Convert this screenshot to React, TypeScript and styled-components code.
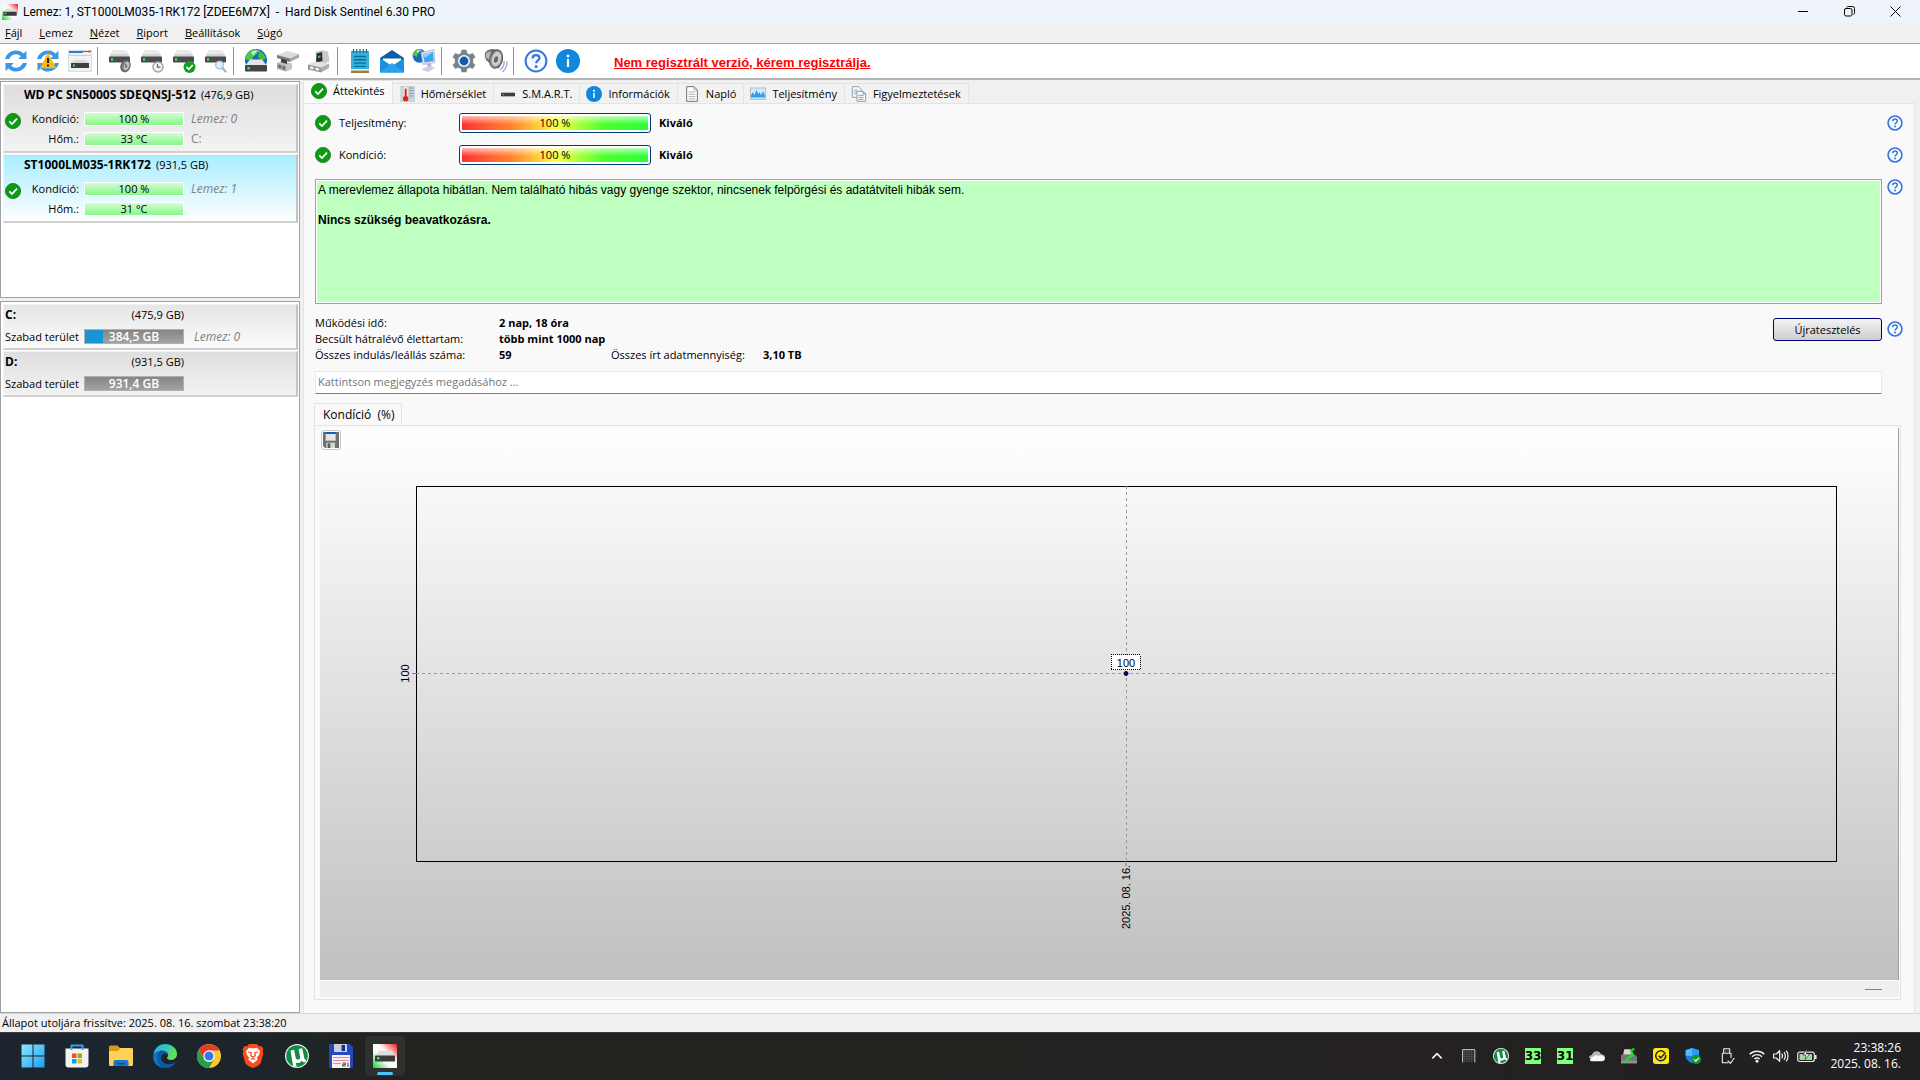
import React from "react";
import styled, { createGlobalStyle, css } from "styled-components";

const UI = `"Open Sans", "Noto Sans", sans-serif`;
const ARIAL = `"Liberation Sans", Arial, sans-serif`;

const Global = createGlobalStyle`
  *, *::before, *::after { box-sizing: border-box; }
  html, body, #root { height: 100%; margin: 0; }
  body { font: 11px/16px ${UI}; color: #000; background: #f0f0f0; overflow: hidden; }
  button, input { font: inherit; color: inherit; margin: 0; }
  button { padding: 0; border: 0; background: none; cursor: default; }
  p, h1, dl, dd, dt, ul { margin: 0; padding: 0; font-size: inherit; font-weight: inherit; }
  ul { list-style: none; }
  svg { display: block; flex: none; }
`;

/* ---------- window frame ---------- */

const Desktop = styled.div`
  display: flex;
  flex-direction: column;
  height: 100vh;
`;

const TitleBar = styled.header`
  display: flex;
  align-items: center;
  height: 23px;
  padding: 0 2px;
  background: #eff4fa;
`;

const Title = styled.h1`
  flex: 1;
  padding-left: 5px;
  font: 12px/16px Roboto, ${UI};
  white-space: pre;
`;

const CaptionButton = styled.button`
  display: grid;
  place-items: center;
  width: 46px;
  height: 23px;
`;

const MenuBar = styled.nav`
  display: flex;
  align-items: center;
  height: 20px;
  gap: 17px;
  padding-left: 5px;
  background: #f0f0f0;
`;

const ToolBar = styled.div`
  display: flex;
  align-items: center;
  height: 37px;
  padding-left: 4px;
  border-top: 1px solid #a0a0a0;
  border-bottom: 2px solid #b4b4b4;
  background: #fff;
`;

const ToolGroup = styled.div<{ $last?: boolean }>`
  display: flex;
  align-items: center;
  gap: 8px;
  height: 28px;
  padding-right: 5px;
  margin-right: 10px;
  border-right: ${(p) => (p.$last ? "0" : "1px solid #909090")};
`;

const ToolButton = styled.button`
  width: 24px;
  height: 24px;
`;

const RegisterLink = styled.a`
  margin: 4px 0 0 19px;
  font: bold 13px/16px ${ARIAL};
  color: #f00;
  text-decoration: underline;
`;

const Body = styled.div`
  flex: 1;
  display: flex;
  min-height: 0;
`;

/* ---------- left column ---------- */

const Sidebar = styled.aside`
  display: flex;
  flex-direction: column;
  gap: 3px;
  width: 300px;
  flex: none;
  padding-top: 1px;
`;

const ListBox = styled.ul<{ $grow?: boolean }>`
  border: 1px solid #a0a0a5;
  background: #fff;
  padding: 2px 1px 2px 2px;
  display: flex;
  flex-direction: column;
  gap: 1px;
  ${(p) => (p.$grow ? "flex: 1;" : "height: 217px;")}
`;

const tone = {
  plain: "linear-gradient(#dedede, #f3f3f3)",
  light: "linear-gradient(#e6e6e6, #fbfbfb)",
  selected: "linear-gradient(#a8edff, #ffffff)",
};

const Item = styled.li<{ $tone: keyof typeof tone }>`
  display: grid;
  align-items: center;
  border-style: solid;
  border-width: 1px 2px 2px 1px;
  border-color: #f2f2f2 #c4c4c4 #cfcfcf #f2f2f2;
  background: ${(p) => tone[p.$tone]};
  white-space: nowrap;
`;

const DiskItem = styled(Item)`
  grid-template-columns: 19px 50px 100px 1fr;
  grid-template-rows: 24px 20px 20px;
  column-gap: 5px;
  padding: 0 0 2px 1px;
`;

const DiskName = styled.p`
  grid-column: 1 / -1;
  align-self: start;
  display: flex;
  gap: 5px;
  padding-left: 19px;
  line-height: 20px;
  b { font-size: 12px; }
`;

const StateCell = styled.span`
  grid-row: 2 / 4;
  align-self: start;
  margin-top: 4px;
`;

const RowLabel = styled.span`
  text-align: right;
`;

const GreenBar = styled.div`
  height: 14px;
  border: 1px solid #fff;
  background: linear-gradient(#d4fcd4, #86f886);
  line-height: 12px;
  text-align: center;
`;

const Side = styled.span<{ $plain?: boolean; $indent?: boolean }>`
  padding-left: ${(p) => (p.$indent ? "8px" : "2px")};
  color: #808080;
  font-size: 12px;
  font-style: ${(p) => (p.$plain ? "normal" : "italic")};
`;

const DriveItem = styled(Item)`
  grid-template-columns: 77px 100px 1fr;
  grid-template-rows: 20px 23px;
  column-gap: 2px;
  padding: 0 0 0 1px;
`;

const DriveName = styled.b`
  font-size: 12px;
`;

const Capacity = styled.span`
  text-align: right;
`;

const SpaceBar = styled.div<{ $used: number }>`
  height: 15px;
  border: 1px solid #b0b0b0;
  background: linear-gradient(90deg, #1a94d2 ${(p) => p.$used}%, transparent 0),
    linear-gradient(#858585, #a2a2a2);
  color: #fff;
  font-size: 12px;
  font-weight: 600;
  line-height: 13px;
  text-align: center;
`;

/* ---------- right column ---------- */

const Main = styled.main`
  flex: 1;
  min-width: 0;
  display: flex;
  flex-direction: column;
  margin: 0 5px 0 3px;
`;

const Tabs = styled.div`
  display: flex;
  align-items: flex-end;
  height: 23px;
`;

const Tab = styled.button<{ $active?: boolean }>`
  display: flex;
  align-items: center;
  gap: 6px;
  padding: 0 7px 0 6px;
  height: 20px;
  border: 1px solid #e4e4e4;
  border-left-width: 0;
  border-bottom: 0;
  background: #f2f2f2;
  white-space: nowrap;
  ${(p) =>
    p.$active &&
    css`
      height: 23px;
      padding: 0 7px 2px;
      border-left-width: 1px;
      background: #f9f9f9;
    `}
`;

const TabIcon = styled.span`
  display: grid;
  place-items: center;
  width: 16px;
`;

const Page = styled.section`
  flex: 1;
  min-height: 0;
  display: flex;
  flex-direction: column;
  padding: 3px 11px 13px 11px;
  border: 1px solid #e4e4e4;
  border-bottom: 0;
  background: #f9f9f9;
`;

const Line = styled.div`
  display: flex;
  align-items: center;
  height: 32px;
  flex: none;
`;

const RatingLabel = styled.span`
  flex: none;
  width: 128px;
  padding-left: 8px;
`;

const Meter = styled.div`
  width: 192px;
  height: 20px;
  padding: 2px;
  border: 1px solid #003c7c;
  border-radius: 3px;
  background: #fff;
`;

const MeterFill = styled.div`
  height: 14px;
  background: linear-gradient(rgba(255, 255, 255, 0.65), rgba(255, 255, 255, 0.15) 45%, transparent 60%),
    linear-gradient(90deg, #ff3030, #ff8a30 28%, #ffff40 50%, #50ff30 76%, #28ff38);
  line-height: 14px;
  text-align: center;
`;

const Verdict = styled.strong`
  flex: 1;
  padding-left: 8px;
  font-weight: 700;
`;

const StatusRow = styled.div`
  display: flex;
  flex: none;
  gap: 5px;
  margin-top: 8px;
`;

const StatusBox = styled.div`
  flex: 1;
  height: 125px;
  padding: 3px 2px;
  border: 1px solid #a0a0a5;
  box-shadow: inset 0 0 0 1px #fff;
  background: #bfffbf;
  font: 12px/15px ${ARIAL};
`;

const StatusStrong = styled.p`
  margin-top: 15px;
  font-weight: bold;
`;

const FactsRow = styled.div`
  display: flex;
  flex: none;
  align-items: flex-start;
  gap: 5px;
  margin-top: 11px;
`;

const Facts = styled.dl`
  flex: 1;
  display: grid;
  grid-template-columns: 184px 112px 152px 1fr;
  line-height: 16px;
  white-space: nowrap;
`;

const Fact = styled.dd<{ $wide?: boolean }>`
  font-weight: 700;
  ${(p) => p.$wide && "grid-column: 2 / -1;"}
`;

const RetestButton = styled.button`
  width: 109px;
  height: 23px;
  margin-top: 3px;
  border: 1px solid #00007c;
  border-radius: 3px;
  background: linear-gradient(#f4f4f4, #cdcdcd);
`;

const HelpButton = styled.button<{ $low?: boolean }>`
  width: 16px;
  height: 16px;
  margin-top: ${(p) => (p.$low ? "6px" : "0")};
`;

const Comment = styled.input`
  flex: none;
  height: 23px;
  margin: 8px 21px 0 0;
  padding: 0 2px 2px;
  border: 1px solid #e8e8e8;
  border-bottom-color: #808080;
  background: #fff;
  outline: 0;
  &::placeholder { color: #757575; opacity: 1; }
`;

const ChartTab = styled.button`
  align-self: flex-start;
  flex: none;
  height: 23px;
  margin: 9px 0 -1px -1px;
  padding: 0 6px 0 8px;
  border: 1px solid #e4e4e4;
  border-bottom: 0;
  background: #f9f9f9;
  font-size: 12px;
  white-space: pre;
`;

const ChartPane = styled.div`
  flex: 1;
  min-height: 0;
  display: flex;
  flex-direction: column;
  margin: 0 2px 0 -1px;
  padding: 2px 1px 2px 5px;
  border: 1px solid #e4e4e4;
`;

const ChartArea = styled.figure`
  position: relative;
  flex: 1;
  min-height: 0;
  display: flex;
  margin: 0;
  padding: 58px 62px 119px 96px;
  border-right: 1px solid #a0a0a0;
  background: linear-gradient(#fff, #c0c0c0);
`;

const SaveButton = styled.button`
  position: absolute;
  left: 1px;
  top: 2px;
  display: grid;
  place-items: center;
  width: 20px;
  height: 20px;
  border: 1px solid #c8c8c8;
  border-radius: 3px;
  background: #fdfdfd;
`;

const Plot = styled.svg`
  flex: 1;
  overflow: visible;
  text { font: 11px ${ARIAL}; text-anchor: middle; }
`;

const ChartFooter = styled.div`
  display: flex;
  align-items: center;
  justify-content: flex-end;
  height: 16px;
  margin-top: 1px;
  padding-right: 17px;
  background: #efefef;
`;

const Dash = styled.span`
  width: 17px;
  border-top: 1px solid #808080;
`;

const StatusBar = styled.footer`
  height: 19px;
  padding-left: 2px;
  border-top: 1px solid #d8d8d8;
  background: #f0f0f0;
  line-height: 18px;
`;

/* ---------- taskbar ---------- */

const TaskBar = styled.div`
  display: flex;
  align-items: center;
  flex: none;
  height: 48px;
  padding: 0 19px 1px 13px;
  border-top: 1px solid #38393b;
  background: linear-gradient(90deg, #1c2431, #1d2529 14%, #22231f 20%, #242120 75%, #202023);
  color: #fff;
`;

const Pinned = styled.div`
  display: flex;
  flex: 1;
  gap: 4px;
`;

const AppButton = styled.button<{ $active?: boolean }>`
  position: relative;
  display: grid;
  place-items: center;
  width: 40px;
  height: 40px;
  border-radius: 4px;
  ${(p) =>
    p.$active &&
    css`
      background: #2e2f2f;
      &::after {
        content: "";
        position: absolute;
        left: 12px;
        bottom: 1px;
        width: 16px;
        height: 3px;
        border-radius: 2px;
        background: #4cc2ff;
      }
    `}
`;

const Tray = styled.div`
  display: flex;
  align-items: center;
`;

const TrayButton = styled.button<{ $w?: number }>`
  display: grid;
  place-items: center;
  width: ${(p) => p.$w ?? 32}px;
  height: 40px;
`;

const TempBadge = styled.span`
  width: 16px;
  height: 16px;
  background: #80ff80;
  color: #000;
  font: bold 13px/16px "DejaVu Sans Condensed", "DejaVu Sans", sans-serif;
  text-align: center;
  overflow: hidden;
`;

const Clock = styled.time`
  width: 80px;
  text-align: right;
  font-size: 12px;
  line-height: 16px;
`;

/* ---------- icons ---------- */

const Svg = ({ s = 24, children }: { s?: number; children: React.ReactNode }) => (
  <svg width={s} height={s} viewBox="0 0 24 24" fill="none" aria-hidden="true">
    {children}
  </svg>
);

const DriveShape = ({ t = "" }: { t?: string }) => (
  <g transform={t}>
    <path d="M5 0h13l4 7.500H1z" fill="#d4d4d6" />
    <path d="M5 0h13l2 4H3z" fill="#e9e9ea" />
    <rect x="1" y="6.500" width="21" height="6" rx="0.800" fill="#4b4b4d" />
    <rect x="3" y="8.300" width="2.200" height="2.200" fill="#30f050" />
  </g>
);

const CheckIcon = () => (
  <Svg s={16}>
    <circle cx="12" cy="12" r="11.400" fill="#0f9a16" stroke="#0b7a10" strokeWidth="1.200" />
    <path d="M6.500 12.500l4 4 7.500-8" stroke="#fff" strokeWidth="2.600" />
  </Svg>
);

const HelpIcon = ({ s = 16 }: { s?: number }) => (
  <Svg s={s}>
    <circle cx="12" cy="12" r="10.400" fill="#f6faff" stroke="#3575d6" strokeWidth={s > 16 ? 2 : 2.4} />
    <path d="M8.600 9.400c0-2.200 1.500-3.300 3.400-3.300s3.400 1.100 3.400 3c0 2.600-3.300 2.600-3.300 5.200" stroke="#3575d6" strokeWidth="2.200" />
    <circle cx="12.100" cy="17.400" r="1.500" fill="#3575d6" />
  </Svg>
);

const InfoIcon = ({ s = 24 }: { s?: number }) => (
  <Svg s={s}>
    <circle cx="12" cy="12" r="12" fill="#0f88dc" />
    <circle cx="12" cy="7" r="1.500" fill="#fff" />
    <path d="M12 10v8" stroke="#fff" strokeWidth="2.200" />
  </Svg>
);

const RefreshShape = () => (
  <g fill="#3a97e6">
    <path d="M1 10C2.500 4.500 7 1.500 12 1.500c3.200 0 5.600 1.200 7.400 3.100L22.500 2v8h-8.300l2.700-2.800C15.600 5.900 14 5.200 12 5.200c-3 0-5.600 1.800-6.800 4.800z" />
    <path d="M23 14c-1.500 5.500-6 8.500-11 8.500-3.200 0-5.600-1.200-7.400-3.100L1.500 22v-8h8.300l-2.700 2.800c1.300 1.300 2.900 2 4.900 2 3 0 5.600-1.800 6.800-4.800z" />
  </g>
);

const RefreshIcon = () => <Svg><RefreshShape /></Svg>;

const RefreshWarnIcon = () => (
  <Svg>
    <RefreshShape />
    <path d="M12 5l7 13.500H5z" fill="#fdb714" stroke="#fdb714" strokeWidth="1.500" strokeLinejoin="round" />
    <path d="M12 9v5M12 15.500v2" stroke="#222" strokeWidth="2" />
  </Svg>
);

const WindowDriveIcon = () => (
  <Svg>
    <rect x="0.500" y="1.500" width="23" height="21" fill="#f1f1f2" stroke="#dcdcde" />
    <path d="M1 3h14" stroke="#2b7fd4" strokeWidth="2" />
    <path d="M15 2.500h5" stroke="#6b6b6b" />
    <path d="M20 2.500h3" stroke="#e23a2e" strokeWidth="1.500" />
    <path d="M1 6.500h22" stroke="#cfcfd2" />
    <path d="M6 11h12l3 4H3z" fill="#dadada" />
    <rect x="3" y="14" width="18" height="5" fill="#3f3f41" />
    <rect x="5" y="15.500" width="2" height="2" fill="#30f050" />
  </Svg>
);

const DriveSpeakerIcon = () => (
  <Svg>
    <DriveShape t="translate(0 1)" />
    <ellipse cx="17.500" cy="17" rx="4.500" ry="6" transform="rotate(20 17.500 17)" fill="#77777a" stroke="#5f5f61" />
    <ellipse cx="18.500" cy="17" rx="2.600" ry="4.300" transform="rotate(20 18.500 17)" fill="#c4c4c8" />
    <ellipse cx="18" cy="17" rx="1.200" ry="2" fill="#77777a" />
  </Svg>
);

const DriveClockIcon = () => (
  <Svg>
    <DriveShape t="translate(0 1)" />
    <circle cx="18" cy="18" r="5" fill="#f4f4f4" stroke="#a4a4a8" strokeWidth="1.500" />
    <path d="M17.500 15v3.200h3" stroke="#666" strokeWidth="1.200" />
  </Svg>
);

const DriveCheckIcon = () => (
  <Svg>
    <DriveShape t="translate(0 1)" />
    <circle cx="17.500" cy="18" r="6" fill="#0fa01c" />
    <path d="M14.500 18l2.300 2.300 4-4.300" stroke="#fff" strokeWidth="1.800" />
  </Svg>
);

const DriveSearchIcon = () => (
  <Svg>
    <DriveShape t="translate(0 1)" />
    <circle cx="15.500" cy="16" r="3.800" fill="#dff0ff" stroke="#a9bccd" strokeWidth="1.300" />
    <path d="M18.300 19l4 4.300" stroke="#b9a9a0" strokeWidth="2" />
  </Svg>
);

const GlobeShape = ({ t = "" }: { t?: string }) => (
  <g transform={t}>
    <circle cx="12" cy="11" r="11" fill="#1767c8" />
    <path d="M3 5q4-5 9-5l1 5-4 3-1 5-4-2-3-1Q1 7 3 5z" fill="#4dc840" />
    <path d="M15 2q5 2 7 7l-4 3-4-4z" fill="#48bd3c" />
    <path d="M7 3q5-3 9-1-5 1-7 5z" fill="#d8f4ff" opacity="0.750" />
  </g>
);

const GlobeDriveIcon = () => (
  <Svg>
    <GlobeShape />
    <path d="M6 10.500h12l5 6.500H1z" fill="#e4e4e4" />
    <rect x="1" y="16" width="22" height="6.500" rx="0.800" fill="#454547" />
    <rect x="3.500" y="18" width="2.400" height="2.400" fill="#30f050" />
  </Svg>
);

const PrinterDriveIcon = () => (
  <Svg>
    <path d="M1 6L11 2l12 3-9 4.500z" fill="#dadada" />
    <path d="M14 9.500L23 5v3.500L14 13z" fill="#a6a6a6" />
    <path d="M1 6l13 3.500V13L1 9z" fill="#78787a" />
    <path d="M1 14l6-2 9 2.500v5.500L10 22.500 1 19.500z" fill="#c4c4c6" />
    <path d="M1 14l9 3v5.500L1 19.500z" fill="#a2a2a4" />
    <path d="M2.500 16l2.500.800V19l-2.500-.800zM6.500 17.300l2.500.800v2.300l-2.500-.800z" fill="#5c5c5e" />
    <path d="M5 9.500l6 1.800V15l-6-1.800z" fill="#3f3f41" />
  </Svg>
);

const ServerIcon = () => (
  <Svg>
    <path d="M7 3l7-2 6 1.500 1.500 10-10 3.500z" fill="#c9c9cb" />
    <path d="M8.500 4.500l5.500-1.500.500 9-6.500 1.500z" fill="#2c2c2f" />
    <path d="M10 7l2.500-.500v2L10 9z" fill="#2ed04a" />
    <path d="M0 15.500l7-3 14 2-8 4z" fill="#e2e2e4" />
    <path d="M0 15.500l13 3v5L0 20.500z" fill="#939397" />
    <path d="M13 18.500l8-4v4.500l-8 4.500z" fill="#adadaf" />
    <path d="M2 17.200l3.500.800v2.500L2 19.700zM7.500 18.500l3.500.800v2.500l-3.500-.800z" fill="#f0f0f0" />
  </Svg>
);

const NotepadIcon = () => (
  <Svg>
    <rect x="3" y="2" width="18" height="20" fill="#35b0d8" />
    <path d="M3 21.500h18V24H3z" fill="#b4762a" />
    <path d="M3 20h18v1.500H3z" fill="#f2f2f2" />
    <path d="M5.500 0v4M8.700 0v4M12 0v4M15.300 0v4M18.500 0v4" stroke="#176f96" strokeWidth="1.300" />
    <path d="M6 7.500h12M6 10.800h12M6 14.100h12M6 17.400h12" stroke="#0f6f9c" strokeWidth="1.400" />
  </Svg>
);

const MailIcon = () => (
  <Svg>
    <path d="M0 9L12 1l12 8v4H0z" fill="#0b5fa8" />
    <path d="M3 9.500h18V16H3z" fill="#fff" />
    <path d="M0 9l12 8 12-8v14.500H0z" fill="#1a8fe0" />
    <path d="M0 23.500L12 14l12 9.500z" fill="#2aa0ee" />
  </Svg>
);

const GlobeMonitorIcon = () => (
  <Svg>
    <GlobeShape t="scale(0.620)" />
    <path d="M9 3.500l13-3 1 13-12 2z" fill="#e2e2ee" stroke="#a9a9bb" strokeWidth="0.700" />
    <path d="M11 5l10-2.300.700 9.300-9.200 1.500z" fill="#3aa6f0" />
    <path d="M11 5l10-2.300L13 9z" fill="#8fd4ff" />
    <path d="M15 15l4-.500.500 4h-4z" fill="#b6b4cc" />
    <path d="M9 20l8-3 6 2-7 4z" fill="#cfcde0" />
  </Svg>
);

const GearIcon = () => (
  <Svg>
    <path
      d="M9.500 0.800h5l.600 3.300 2.500 1.300 3-1.300 2.800 4-2.300 2.200v3.400l2.300 2.200-2.800 4-3-1.300-2.500 1.300-.600 3.300h-5l-.600-3.300-2.500-1.300-3 1.300-2.800-4 2.300-2.200v-3.400L.600 8.100l2.800-4 3 1.300 2.500-1.300z"
      fill="#7a838c"
    />
    <circle cx="12" cy="12" r="6" fill="#f4f8fc" />
    <circle cx="12" cy="12" r="4.400" fill="#0c5cb0" />
  </Svg>
);

const SpeakerIcon = () => (
  <Svg>
    <path d="M1 4Q3 .500 8 0l7 1q4 5 3.500 12L15 19q-4 1-7-3L2 11Q0 7 1 4z" fill="#6b6b6d" />
    <path d="M2 4.500Q4 2 7 2.500L6 12 2.500 9Q1 7 2 4.500z" fill="#b4b4b6" />
    <ellipse cx="12" cy="10" rx="6.300" ry="9.300" transform="rotate(14 12 10)" fill="#8f8f91" stroke="#58585a" />
    <ellipse cx="12.500" cy="10" rx="4.500" ry="7.300" transform="rotate(14 12.500 10)" fill="#cfcfd1" />
    <ellipse cx="12" cy="10.500" rx="2" ry="3.300" transform="rotate(14 12 10.500)" fill="#66666a" />
    <path d="M20 12q1 5-4 9M23 12.500q.500 6-4.500 10.500" stroke="#a6a6cc" strokeWidth="1.300" />
  </Svg>
);

const ThermoIcon = () => (
  <Svg s={16}>
    <rect x="2" y="0" width="22" height="24" fill="#c9d2da" />
    <path d="M15 3h7M15 7h7M15 11h7M15 15h7" stroke="#8f9aa4" strokeWidth="1.500" />
    <rect x="7" y="1" width="6" height="18" rx="3" fill="#f2f2f2" />
    <path d="M10 4v14" stroke="#d82418" strokeWidth="3" />
    <circle cx="10" cy="19" r="4" fill="#d82418" />
  </Svg>
);

const SmartIcon = () => (
  <Svg s={14}>
    <path d="M2 9h20l2 2H0z" fill="#c8c8c8" />
    <rect x="0" y="10" width="24" height="6" fill="#3d3d3f" />
    <rect x="3" y="12" width="2.500" height="2" fill="#30e050" />
  </Svg>
);

const PageIcon = () => (
  <Svg s={16}>
    <path d="M4 1h11l5 5v17H4z" fill="#fff" stroke="#6f6f6f" strokeWidth="1.500" />
    <path d="M15 1v5h5M7 9h10M7 12.500h10M7 16h10M7 19.500h10" stroke="#9a9a9a" strokeWidth="1.200" />
  </Svg>
);

const WaveIcon = () => (
  <Svg s={16}>
    <rect x="0.700" y="3" width="22.600" height="17" fill="#d4ecff" stroke="#a8bccc" strokeWidth="1.400" />
    <path d="M1.500 14l3-5 2 5 3-8 3 6 2-3 2 5 3-6 2 4 1 3v4h-21z" fill="#3a9ae8" />
    <path d="M1.500 17h21v2.500h-21z" fill="#bfe2fb" />
  </Svg>
);

const PagesIcon = () => (
  <Svg s={16}>
    <path d="M2 1h9l4 4v12H2z" fill="#fff" stroke="#8c949c" strokeWidth="1.400" />
    <path d="M4 6h6M4 9h5M4 12h5" stroke="#5b9bd5" strokeWidth="1.200" />
    <path d="M9 8h9l4 4v11H9z" fill="#fff" stroke="#8c949c" strokeWidth="1.400" />
    <path d="M18 8v4h4M11 14h8M11 17h8M11 20h8" stroke="#4a8cd0" strokeWidth="1.200" />
  </Svg>
);

const SaveIcon = () => (
  <Svg s={16}>
    <path d="M0 0h24v24H3l-3-3z" fill="#707072" />
    <rect x="4" y="0" width="15" height="3" fill="#0a62b8" />
    <rect x="4" y="3" width="15" height="10" fill="#e6e6e6" />
    <rect x="5" y="16" width="13" height="8" fill="#d4d4d4" />
    <rect x="7" y="17" width="4" height="7" fill="#5a5a5c" />
  </Svg>
);

const AppIcon = ({ s }: { s: number }) => (
  <Svg s={s}>
    <defs>
      <linearGradient id="hds" x1="0" y1="1" x2="1" y2="0">
        <stop offset="0" stopColor="#10d030" />
        <stop offset="0.380" stopColor="#f4fff4" />
        <stop offset="0.620" stopColor="#fff4f4" />
        <stop offset="1" stopColor="#f01818" />
      </linearGradient>
    </defs>
    <rect width="24" height="24" fill="url(#hds)" />
    <path d="M6 7h13l3 5H2z" fill="#dcdcdc" />
    <rect x="2" y="11.500" width="20" height="6" rx="0.800" fill="#3a3a3c" />
    <rect x="4" y="13" width="2.400" height="2.400" fill="#30f050" />
  </Svg>
);

const WindowsIcon = () => (
  <Svg>
    <defs>
      <linearGradient id="win" x1="0" y1="0" x2="1" y2="1">
        <stop offset="0" stopColor="#8ce8ff" />
        <stop offset="1" stopColor="#1f9ff0" />
      </linearGradient>
    </defs>
    <path d="M.500.500h11v11H.500zM12.500.500h11v11h-11zM.500 12.500h11v11H.500zM12.500 12.500h11v11h-11z" fill="url(#win)" />
  </Svg>
);

const StoreIcon = () => (
  <Svg>
    <path d="M6.500 6V1.500h11V6" stroke="#2aa4ea" strokeWidth="2" />
    <path d="M.500 4.500h23v16a3 3 0 0 1-3 3h-17a3 3 0 0 1-3-3z" fill="#f2f2f2" />
    <path d="M6.500 6V4.500M17.500 6V4.500" stroke="#2aa4ea" strokeWidth="2" />
    <path d="M7 9.500h4.500V14H7z" fill="#f25022" />
    <path d="M12.500 9.500H17V14h-4.500z" fill="#7fba00" />
    <path d="M7 15h4.500v4.500H7z" fill="#00a4ef" />
    <path d="M12.500 15H17v4.500h-4.500z" fill="#ffb900" />
  </Svg>
);

const FolderIcon = () => (
  <Svg>
    <path d="M0 3a1.500 1.500 0 0 1 1.500-1.500h7L11 4h11.500A1.500 1.500 0 0 1 24 5.500V8H0z" fill="#d89a14" />
    <path d="M0 7h9l2-3h11.500A1.500 1.500 0 0 1 24 5.500v15a1.500 1.500 0 0 1-1.500 1.500h-21A1.500 1.500 0 0 1 0 20.500z" fill="#fdd15a" />
    <path d="M4.500 22v-4a2 2 0 0 1 2-2h11a2 2 0 0 1 2 2v4z" fill="#1a78c8" />
    <path d="M8 19h8v1.500H8z" fill="#0d4f94" />
  </Svg>
);

const EdgeIcon = () => (
  <Svg>
    <defs>
      <linearGradient id="edgeTop" x1="0" y1="0" x2="1" y2="0.300">
        <stop offset="0" stopColor="#2aa8e8" />
        <stop offset="0.600" stopColor="#34c8b8" />
        <stop offset="1" stopColor="#6ae04e" />
      </linearGradient>
    </defs>
    <path d="M.300 11C1 4.500 6 0 12.200 0 19 0 24 4.500 24 10c0 3.500-2.700 6-6 6-2.600 0-4-1-4-1.900 0-.800 1-1 1-3C15 8.600 12.500 6.800 9.500 6.800 5 6.800 1 9.500.300 11z" fill="url(#edgeTop)" />
    <path d="M.100 12.500C.500 8.500 5 6.800 9.200 6.800c-3 1-4.600 4-4.600 7.200 0 4.500 3.600 8.500 8 9.900C5.500 24.300 0 19 .100 12.500z" fill="#1273c8" />
    <path d="M9.600 10.500c-1 1-1.400 2.300-1.400 3.500 0 3.500 3.400 6.200 7.600 6.200 2.400 0 4.700-.700 5.900-1.600.500-.300 1 .100.700.600C20.500 22 17 24 13.500 24 8 24 4.300 19.500 4.300 15c0-4.500 2.500-6.500 5.200-8 2.500 0 5.500 1.200 5.500 4.200-1-1.900-4-2.200-5.400-.700z" fill="#0c59a4" />
  </Svg>
);

const ChromeIcon = () => (
  <Svg>
    <circle cx="12" cy="12" r="12" fill="#fcc934" />
    <path d="M1.600 6A12 12 0 0 1 22.400 6.400H12L6.800 15z" fill="#e33b2e" />
    <path d="M1.600 6l5.200 9A6 6 0 0 0 17.200 15L12 24A12 12 0 0 1 1.600 6z" fill="#22a04a" />
    <circle cx="12" cy="12" r="5.700" fill="#fff" />
    <circle cx="12" cy="12" r="4.500" fill="#3478e8" />
  </Svg>
);

const BraveIcon = () => (
  <Svg>
    <path d="M8 0h8l2 2.300 2.500-.300 1.800 3-.600 2 .600 2.500-2.600 9.500c-.400 1.300-4.500 4.200-7.700 5-3.200-.800-7.300-3.700-7.700-5L1.700 9.500 2.300 7l-.600-2 1.800-3 2.500.300z" fill="#fb4a1c" />
    <path
      d="M12 4.500l4-.700 3 3.400-1 3.800-2.200 2.400.900 2.200-2 1.600L12 19.500l-2.700-2.300-2-1.600.900-2.200L6 11 5 7.200l3-3.400z"
      fill="#fff"
    />
    <path d="M7 8l3.300 1-.500 2.700L12 13l2.200-1.300-.500-2.700L17 8M10 15.500l2-1.200 2 1.200" stroke="#fb4a1c" strokeWidth="1.300" />
  </Svg>
);

const TorrentIcon = ({ s }: { s: number }) => (
  <Svg s={s}>
    <circle cx="12" cy="12" r="12" fill="#e8f4ec" />
    <circle cx="12" cy="12" r="10.800" fill="#148a48" />
    <path d="M5.500 6.500l3.600-.700 1.500 7.500c.400 1.900 1.500 2.600 2.800 2.300 1.400-.300 2-1.400 1.600-3.200L13.600 5l3.600-.700 2.200 10.200c.200.900.700 1.100 1.500.900l.400 2.400c-2.300.800-3.900.200-4.600-1.400-.700 1.400-1.700 2.200-3.200 2.500-1.200.200-2.100 0-2.800-.500l.900 4.200-3.400.200z" fill="#fff" />
  </Svg>
);

const FloppyIcon = () => (
  <Svg>
    <path d="M0 1.500A1.500 1.500 0 0 1 1.500 0H21l3 3v19.500a1.500 1.500 0 0 1-1.500 1.500h-21A1.500 1.500 0 0 1 0 22.500z" fill="#2348c0" />
    <rect x="5" y="0" width="13" height="8" fill="#ccd0da" />
    <rect x="12.500" y="1" width="3.500" height="6" fill="#1a3390" />
    <rect x="3" y="11" width="18" height="13" fill="#f8f0f2" />
    <path d="M4 13.500h16M4 16.500h16M4 19.500h8" stroke="#e48a98" strokeWidth="1.200" />
    <path d="M13.500 19h3v1.800h-3V22h3M19 18.500V23" stroke="#444" strokeWidth="1" />
  </Svg>
);

const WhiteStroke = ({ d, s = 16, w = 2 }: { d: string; s?: number; w?: number }) => (
  <Svg s={s}>
    <path d={d} stroke="#f4f4f4" strokeWidth={w} strokeLinejoin="round" />
  </Svg>
);

const GridIcon = () => (
  <Svg s={14}>
    <rect x="1" y="1" width="20" height="22" fill="#2c2c2c" />
    <path d="M4 1v22M8 1v22M12 1v22M16 1v22M1 5h20M1 9h20M1 13h20M1 17h20" stroke="#666" strokeWidth="0.800" />
    <path d="M1 23V1h21v22" stroke="#ddd" strokeWidth="1.500" />
  </Svg>
);

const CloudIcon = () => (
  <Svg s={16}>
    <path d="M0 15c0-3 2-4.500 4.500-4.500C5.500 7 8 5 11.500 5c3.500 0 5.500 1.800 6.500 4.500 3.500 0 6 2 6 5z" fill="#b8b8ba" />
    <path d="M2 19.500q-1.500-5 4-6.500 4-4 8.500-1 6-3 9.500 3 0 4.500-5 5H6q-3 0-4-.500z" fill="#f8f8f8" />
  </Svg>
);

const TrayDriveIcon = () => (
  <Svg s={16}>
    <path d="M5 2h9l5 8H3z" fill="#d8d8d8" />
    <path d="M0 10h21l3 3v10H0z" fill="#77777a" />
    <path d="M0 19h24v4H0z" fill="#909092" />
    <path d="M20 1l-5 3 3 7-8 4-3 7" stroke="#1ee01e" strokeWidth="3.200" />
  </Svg>
);

const NortonIcon = () => (
  <Svg s={16}>
    <rect width="24" height="24" rx="4" fill="#fde61c" />
    <path d="M17 6.500A7.500 7.500 0 1 0 19 10.500" stroke="#222" strokeWidth="2.200" />
    <path d="M8.500 11.500l3.200 3.300 7-8" stroke="#222" strokeWidth="2.200" />
  </Svg>
);

const ShieldIcon = () => (
  <Svg s={16}>
    <path d="M11 0l10 3.500V11c0 6-4 10-10 12C5 21 1 17 1 11V3.500z" fill="#1c7fd8" />
    <path d="M11 0v11.500H1v-8z" fill="#4cc0ff" />
    <path d="M11 0l10 3.500v8H11z" fill="#2b9cf0" />
    <circle cx="17" cy="17" r="7" fill="#109a2c" />
    <path d="M13.500 17l2.700 2.700 4.500-5" stroke="#fff" strokeWidth="1.800" />
  </Svg>
);

const WifiIcon = () => (
  <Svg s={16}>
    <path d="M1 9.500a15.500 15.500 0 0 1 22 0M4.500 13.200a10.500 10.500 0 0 1 15 0M8 16.700a5.600 5.600 0 0 1 8 0" stroke="#f4f4f4" strokeWidth="2" />
    <circle cx="12" cy="20" r="2.200" fill="#f4f4f4" />
  </Svg>
);

const BatteryIcon = () => (
  <svg width="20" height="14" viewBox="0 0 20 14" fill="none" aria-hidden="true">
    <rect x="0.700" y="3.200" width="16.600" height="9.300" rx="2" stroke="#e8e8e8" strokeWidth="1.200" />
    <rect x="2.500" y="5" width="12.500" height="6" fill="#9ad89c" />
    <path d="M18.800 6v4" stroke="#e8e8e8" strokeWidth="1.600" />
    <path d="M10 0L6 6h3l-1 4.500L12.500 5h-3z" fill="#fff" stroke="#222" strokeWidth="0.600" />
  </svg>
);

/* ---------- data ---------- */

const menus = ["Fájl", "Lemez", "Nézet", "Riport", "Beállítások", "Súgó"];

const toolGroups: [string, React.ReactNode][][] = [
  [["Frissítés", <RefreshIcon />], ["Ellenőrzés", <RefreshWarnIcon />], ["Nézet", <WindowDriveIcon />]],
  [["Zajszint", <DriveSpeakerIcon />], ["Rövid teszt", <DriveClockIcon />], ["Teszt", <DriveCheckIcon />], ["Felületteszt", <DriveSearchIcon />]],
  [["Hálózat", <GlobeDriveIcon />], ["Eszközök", <PrinterDriveIcon />], ["Szerver", <ServerIcon />]],
  [["Riport", <NotepadIcon />], ["Levél", <MailIcon />], ["Távoli gépek", <GlobeMonitorIcon />]],
  [["Beállítások", <GearIcon />], ["Hangok", <SpeakerIcon />]],
  [["Súgó", <HelpIcon s={24} />], ["Névjegy", <InfoIcon />]],
];

const disks = [
  { name: "WD PC SN5000S SDEQNSJ-512", size: "476,9 GB", health: "100 %", temp: "33 °C", index: "Lemez: 0", drive: "C:", tone: "plain" as const },
  { name: "ST1000LM035-1RK172", size: "931,5 GB", health: "100 %", temp: "31 °C", index: "Lemez: 1", drive: "", tone: "selected" as const },
];

const drives = [
  { name: "C:", size: "(475,9 GB)", free: "384,5 GB", used: 18, disk: "Lemez: 0", tone: "light" as const },
  { name: "D:", size: "(931,5 GB)", free: "931,4 GB", used: 0, disk: "", tone: "plain" as const },
];

const tabs: [string, React.ReactNode][] = [
  ["Áttekintés", <CheckIcon />],
  ["Hőmérséklet", <ThermoIcon />],
  ["S.M.A.R.T.", <SmartIcon />],
  ["Információk", <InfoIcon s={16} />],
  ["Napló", <PageIcon />],
  ["Teljesítmény", <WaveIcon />],
  ["Figyelmeztetések", <PagesIcon />],
];

const pinned: [string, React.ReactNode][] = [
  ["Start", <WindowsIcon />],
  ["Microsoft Store", <StoreIcon />],
  ["Fájlkezelő", <FolderIcon />],
  ["Edge", <EdgeIcon />],
  ["Chrome", <ChromeIcon />],
  ["Brave", <BraveIcon />],
  ["µTorrent", <TorrentIcon s={24} />],
  ["Total Commander", <FloppyIcon />],
  ["Hard Disk Sentinel", <AppIcon s={24} />],
];

const tray: [string, React.ReactNode, number?][] = [
  ["Rejtett ikonok", <WhiteStroke d="M5 15.500l7-7 7 7" w={2.4} />],
  ["Memória", <GridIcon />],
  ["µTorrent", <TorrentIcon s={16} />],
  ["Hőmérséklet, lemez 0", <TempBadge>33</TempBadge>],
  ["Hőmérséklet, lemez 1", <TempBadge>31</TempBadge>],
  ["OneDrive", <CloudIcon />],
  ["Lemezállapot", <TrayDriveIcon />],
  ["Norton", <NortonIcon />],
  ["Windows biztonság", <ShieldIcon />],
  ["USB", <WhiteStroke d="M7 8V1h9v7M9.500 4.500h1M13 4.500h1M5 8h13v7M5 8v14h9M13 19l4 4 6-8" w={1.6} />, 36],
  ["Wi-Fi", <WifiIcon />, 24],
  ["Hangerő", <WhiteStroke d="M1 9h4l5-5v16l-5-5H1zM13 8.500q2.500 3.500 0 7M16.500 6q4 6 0 12M20 4q5 8 0 16" w={1.8} />, 24],
  ["Akkumulátor", <BatteryIcon />, 28],
];

/* ---------- screens ---------- */

const Help = ({ low }: { low?: boolean }) => (
  <HelpButton $low={low} aria-label="Súgó">
    <HelpIcon />
  </HelpButton>
);

const Rating = ({ label }: { label: string }) => (
  <Line>
    <CheckIcon />
    <RatingLabel>{label}</RatingLabel>
    <Meter role="meter" aria-label={label} aria-valuenow={100} aria-valuemin={0} aria-valuemax={100}>
      <MeterFill>100 %</MeterFill>
    </Meter>
    <Verdict>Kiváló</Verdict>
    <Help />
  </Line>
);

const HealthChart = () => (
  <ChartArea>
    <SaveButton aria-label="Mentés">
      <SaveIcon />
    </SaveButton>
    <Plot width="100%" height="100%">
      <rect width="100%" height="100%" fill="none" stroke="#000" shapeRendering="crispEdges" />
      <g stroke="#989898" strokeDasharray="3 3" shapeRendering="crispEdges">
        <line x1="0" y1="50%" x2="100%" y2="50%" />
        <line x1="50%" y1="0" x2="50%" y2="100%" />
      </g>
      <svg x="0" y="50%" overflow="visible">
        <path d="M-4 0h4" stroke="#808080" />
        <text transform="translate(-7 0) rotate(-90)">100</text>
      </svg>
      <svg x="50%" y="50%" overflow="visible">
        <rect x="-15" y="-19" width="29" height="15" fill="#fff" stroke="#000" strokeDasharray="1 1" shapeRendering="crispEdges" />
        <text y="-7">100</text>
        <circle r="2" fill="#0000d0" stroke="#000" />
      </svg>
      <svg x="50%" y="100%" overflow="visible">
        <path d="M0 0v5" stroke="#808080" />
        <text transform="translate(4 36) rotate(-90)">2025. 08. 16.</text>
      </svg>
    </Plot>
  </ChartArea>
);

export default function App() {
  return (
    <Desktop>
      <Global />
      <TitleBar>
        <AppIcon s={16} />
        <Title>{"Lemez: 1, ST1000LM035-1RK172 [ZDEE6M7X]  -  Hard Disk Sentinel 6.30 PRO"}</Title>
        <CaptionButton aria-label="Kis méret">
          <svg width="11" height="11" viewBox="0 0 11 11"><path d="M0 5.500h10" stroke="#000" /></svg>
        </CaptionButton>
        <CaptionButton aria-label="Előző méret">
          <svg width="11" height="11" viewBox="0 0 11 11" fill="none" stroke="#000">
            <rect x="0.500" y="2.500" width="7.500" height="7.500" rx="1.500" />
            <path d="M2.500 1.500q.500-1 2-1h4q2 0 2 2v4q0 1.500-1 2" />
          </svg>
        </CaptionButton>
        <CaptionButton aria-label="Bezárás">
          <svg width="11" height="11" viewBox="0 0 11 11"><path d="M.500.500l10 10M10.500.500l-10 10" stroke="#000" /></svg>
        </CaptionButton>
      </TitleBar>
      <MenuBar>
        {menus.map((m) => (
          <button key={m}><u>{m[0]}</u>{m.slice(1)}</button>
        ))}
      </MenuBar>
      <ToolBar>
        {toolGroups.map((group, i) => (
          <ToolGroup key={i} $last={i === toolGroups.length - 1}>
            {group.map(([name, icon]) => (
              <ToolButton key={name} aria-label={name}>{icon}</ToolButton>
            ))}
          </ToolGroup>
        ))}
        <RegisterLink href="#">Nem regisztrált verzió, kérem regisztrálja.</RegisterLink>
      </ToolBar>

      <Body>
        <Sidebar>
          <ListBox>
            {disks.map((d) => (
              <DiskItem key={d.name} $tone={d.tone}>
                <DiskName><b>{d.name}</b><span>({d.size})</span></DiskName>
                <StateCell><CheckIcon /></StateCell>
                <RowLabel>Kondíció:</RowLabel>
                <GreenBar>{d.health}</GreenBar>
                <Side>{d.index}</Side>
                <RowLabel>Hőm.:</RowLabel>
                <GreenBar>{d.temp}</GreenBar>
                <Side $plain>{d.drive}</Side>
              </DiskItem>
            ))}
          </ListBox>
          <ListBox $grow>
            {drives.map((d) => (
              <DriveItem key={d.name} $tone={d.tone}>
                <DriveName>{d.name}</DriveName>
                <Capacity>{d.size}</Capacity>
                <span />
                <span>Szabad terület</span>
                <SpaceBar $used={d.used}>{d.free}</SpaceBar>
                <Side $indent>{d.disk}</Side>
              </DriveItem>
            ))}
          </ListBox>
        </Sidebar>

        <Main>
          <Tabs role="tablist">
            {tabs.map(([name, icon], i) => (
              <Tab key={name} role="tab" aria-selected={i === 0} $active={i === 0}>
                <TabIcon>{icon}</TabIcon>
                {name}
              </Tab>
            ))}
          </Tabs>
          <Page>
            <Rating label="Teljesítmény:" />
            <Rating label="Kondíció:" />
            <StatusRow>
              <StatusBox>
                <p>A merevlemez állapota hibátlan. Nem található hibás vagy gyenge szektor, nincsenek felpörgési és adatátviteli hibák sem.</p>
                <StatusStrong>Nincs szükség beavatkozásra.</StatusStrong>
              </StatusBox>
              <Help />
            </StatusRow>
            <FactsRow>
              <Facts>
                <dt>Működési idő:</dt>
                <Fact $wide>2 nap, 18 óra</Fact>
                <dt>Becsült hátralévő élettartam:</dt>
                <Fact $wide>több mint 1000 nap</Fact>
                <dt>Összes indulás/leállás száma:</dt>
                <Fact>59</Fact>
                <dt>Összes írt adatmennyiség:</dt>
                <Fact>3,10 TB</Fact>
              </Facts>
              <RetestButton>Újratesztelés</RetestButton>
              <Help low />
            </FactsRow>
            <Comment aria-label="Megjegyzés" placeholder="Kattintson megjegyzés megadásához ..." />
            <ChartTab>{"Kondíció  (%)"}</ChartTab>
            <ChartPane>
              <HealthChart />
              <ChartFooter><Dash /></ChartFooter>
            </ChartPane>
          </Page>
        </Main>
      </Body>

      <StatusBar>Állapot utoljára frissítve: 2025. 08. 16. szombat 23:38:20</StatusBar>

      <TaskBar>
        <Pinned>
          {pinned.map(([name, icon], i) => (
            <AppButton key={name} aria-label={name} $active={i === pinned.length - 1}>{icon}</AppButton>
          ))}
        </Pinned>
        <Tray>
          {tray.map(([name, icon, w]) => (
            <TrayButton key={name} aria-label={name} $w={w}>{icon}</TrayButton>
          ))}
        </Tray>
        <Clock>23:38:26<br />2025. 08. 16.</Clock>
      </TaskBar>
    </Desktop>
  );
}
